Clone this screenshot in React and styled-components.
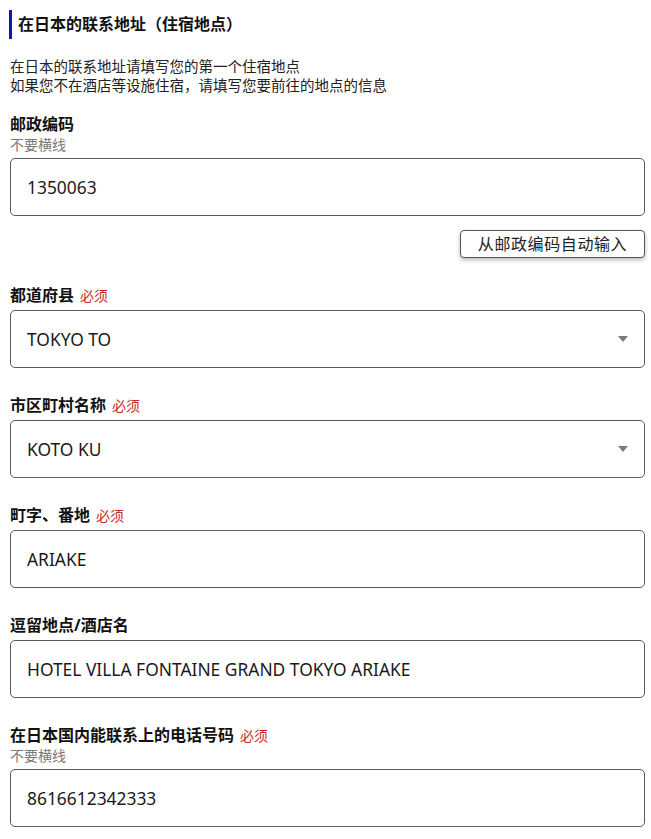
import React from "react";
import styled, { createGlobalStyle } from "styled-components";

const Global = createGlobalStyle`
  html, body { margin: 0; padding: 0; background: #fff; }
  body {
    font-family: "Noto Sans", "Noto Sans CJK SC", sans-serif;
    color: #222;
  }
  * { box-sizing: border-box; }
`;

const Page = styled.div`
  padding: 10px 6px 12px 10px;
  width: 651px;
`;

const Title = styled.h2`
  margin: 0 0 0 -1px;
  border-left: 3px solid #1414b4;
  padding-left: 6px;
  font-size: 16px;
  line-height: 29px;
  font-weight: 700;
  color: #111;
`;

const Intro = styled.p`
  margin: 18px 0 0;
  font-size: 14.5px;
  line-height: 19px;
  color: #222;
`;

const Field = styled.div`
  margin-top: ${(p) => p.$gap}px;
`;

const Label = styled.div`
  height: 22px;
  font-size: 16px;
  line-height: 21px;
  font-weight: 700;
  color: #111;
  margin-bottom: ${(p) => (p.$hasHint ? 0 : 3)}px;
`;

const Required = styled.span`
  font-size: 14px;
  line-height: 1;
  font-weight: 400;
  color: #c62a1f;
  margin-left: 6px;
`;

const Hint = styled.div`
  height: 17px;
  font-size: 14px;
  line-height: 18px;
  color: #7a7a7a;
  margin-bottom: 5px;
`;

const Box = styled.div`
  position: relative;
  height: 58px;
  border: 1px solid #5a5a5a;
  border-radius: 5px;
  display: flex;
  align-items: center;
  padding: 0 16px;
  font-size: 17.4px;
  color: #1a1a1a;
  background: #fff;
`;

const Arrow = styled.span`
  position: absolute;
  right: 16px;
  top: 50%;
  margin-top: -3px;
  width: 0;
  height: 0;
  border-left: 5px solid transparent;
  border-right: 5px solid transparent;
  border-top: 6px solid #7b7b7b;
`;

const ButtonRow = styled.div`
  display: flex;
  justify-content: flex-end;
  margin-top: 14px;
`;

const Button = styled.button`
  width: 185px;
  height: 28px;
  border: 1px solid #555;
  border-radius: 4px;
  background: #fff;
  box-shadow: 0 2px 4px rgba(0, 0, 0, 0.28);
  font-family: "Noto Sans", "Noto Sans CJK SC", sans-serif;
  font-size: 16px;
  letter-spacing: 0.6px;
  color: #222;
  padding: 0;
  line-height: 26px;
`;

function FormField({ label, required, hint, value, select, gap = 27 }) {
  return (
    <Field $gap={gap}>
      <Label $hasHint={!!hint}>
        {label}
        {required && <Required>必须</Required>}
      </Label>
      {hint && <Hint>{hint}</Hint>}
      <Box>
        {value}
        {select && <Arrow />}
      </Box>
    </Field>
  );
}

export default function App() {
  return (
    <>
      <Global />
      <Page>
        <Title>在日本的联系地址（住宿地点）</Title>
        <Intro>
          在日本的联系地址请填写您的第一个住宿地点
          <br />
          如果您不在酒店等设施住宿，请填写您要前往的地点的信息
        </Intro>
        <FormField gap={19} label="邮政编码" hint="不要横线" value="1350063" />
        <ButtonRow>
          <Button>从邮政编码自动输入</Button>
        </ButtonRow>
        <FormField label="都道府县" required value="TOKYO TO" select />
        <FormField label="市区町村名称" required value="KOTO KU" select />
        <FormField label="町字、番地" required value="ARIAKE" />
        <FormField label="逗留地点/酒店名" value="HOTEL VILLA FONTAINE GRAND TOKYO ARIAKE" />
        <FormField
          label="在日本国内能联系上的电话号码"
          required
          hint="不要横线"
          value="8616612342333"
        />
      </Page>
    </>
  );
}
